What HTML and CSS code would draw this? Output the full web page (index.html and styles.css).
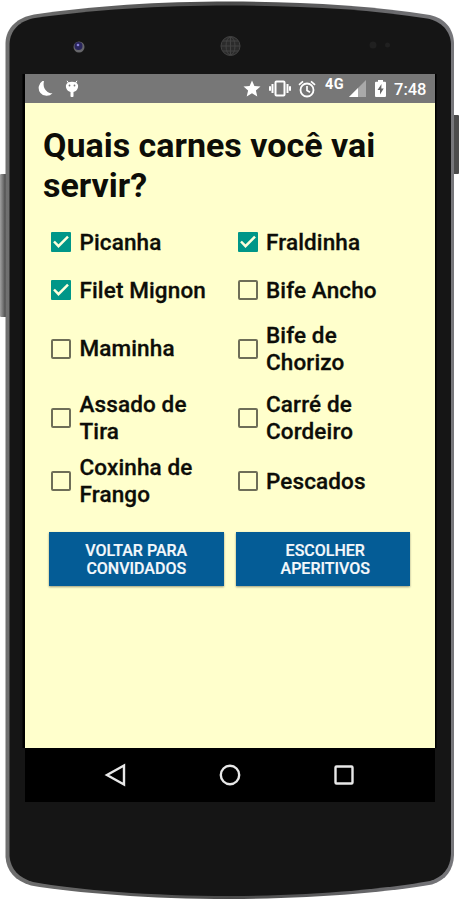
FILE: index.html
```html
<!DOCTYPE html>
<html lang="pt-BR">
	<head>
		<meta charset="UTF-8">
		<title>Churrasco</title>
		<link rel="stylesheet" href="styles.css">
	</head>

	<body>
		<div class="phone">
			<svg class="phone-body" viewBox="0 0 459 900">
				<defs>
					<linearGradient id="leftKey">
						<stop offset="0" stop-color="#a0a0a0"/>
						<stop offset="0.5" stop-color="#6c6c6c"/>
						<stop offset="1" stop-color="#303030"/>
					</linearGradient>
					<linearGradient id="edge">
						<stop offset="0" stop-color="#707070"/>
						<stop offset="0.5" stop-color="#4a4a4a"/>
						<stop offset="1" stop-color="#77777b"/>
					</linearGradient>
				</defs>
				<rect x="0" y="174" width="7" height="143" rx="1" fill="url(#leftKey)"/>
				<rect x="452" y="115" width="7" height="59" rx="1" fill="#4c4c4c"/>
				<path fill="url(#edge)" d="M5.500 43C6 27 18 17.500 34 14.500C90 6 160 1.500 230 1.500S370 5 430 15C444 18 453.500 28 454 43V855C453.500 870 446 880 432 884.500C390 892 310 899 230 899S75 893 31 885.500C15 881 6.500 871 5.500 857Z"/>
				<path fill="#151515" d="M9.500 44C10 30 20 20.500 35 18C90 10 160 5.500 230 5.500S370 9 427 18.500C441 21 450.500 31 451 44V854C450.500 868 443 877 430 881C385 889 310 896 230 896S78 890 33 882C19 878 10.500 869 9.500 856Z"/>
				<circle cx="79" cy="47" r="5.500" fill="#66666a"/>
				<circle cx="78.500" cy="46" r="4" fill="#29255c"/>
				<circle cx="78" cy="45" r="1.300" fill="#8880d8"/>
				<g fill="none" stroke="#434343">
					<circle cx="230.500" cy="46" r="9.500" fill="#2b2b2b"/>
					<ellipse cx="230.500" cy="46" rx="4.500" ry="9"/>
					<path d="M221 46h19M230.500 37v18M223 41h15M223 51h15"/>
				</g>
				<circle cx="373" cy="45" r="3.500" fill="#202020"/>
				<circle cx="387.500" cy="45" r="2.500" fill="#202020"/>
				<path fill="#000" d="M22.500 74h414v674h-414z"/>
			</svg>

			<div class="screen">
				<div class="status-bar">
					<svg class="icon-moon" width="16" height="16" viewBox="0 0 16 16">
						<path fill="#fff" d="M5.500 0A8 8 0 1 0 15.500 12.300C10.500 12.500 5 7.500 7 .2Q6 -.3 5.500 0Z"/>
					</svg>
					<svg class="icon-droid" width="14" height="18" viewBox="0 0 14 18">
						<path stroke="#fff" stroke-width="1" d="M2 .8l2 3M12 .8l-2 3"/>
						<path fill="#fff" d="M1 5C2 2.500 4 1.800 7 1.800S12 2.500 13 5C13.500 8 12 11 8.500 12V16.500Q7 17.500 5.500 16.500V12C2 11 .5 8 1 5Z"/>
						<circle cx="4.500" cy="5.500" r=".9" fill="#777"/>
						<circle cx="9.500" cy="5.500" r=".9" fill="#777"/>
					</svg>
					<span class="spacer"></span>
					<svg class="icon-star" width="18" height="17" viewBox="0 0 18 17">
						<path fill="#fff" d="M9 .5l2.400 5.600 6.100.5-4.600 4 1.400 5.900L9 13.300l-5.300 3.200 1.400-5.900-4.600-4 6.100-.5z"/>
					</svg>
					<svg class="icon-vibrate" width="22" height="17" viewBox="0 0 22 17">
						<rect x="6.500" y="1.500" width="9" height="14" rx="1" fill="none" stroke="#fff" stroke-width="2"/>
						<path fill="none" stroke="#fff" stroke-width="2" d="M3.500 4v9M18.500 4v9M1 6.300v4.400M21 6.300v4.400"/>
					</svg>
					<svg class="icon-alarm" width="18" height="18" viewBox="0 0 18 18">
						<circle cx="9" cy="10" r="6.500" fill="none" stroke="#fff" stroke-width="1.800"/>
						<path fill="none" stroke="#fff" stroke-width="1.700" d="M1 4.800l4-3.500M17 4.800l-4-3.500M9 6v4.500l3 1.800"/>
					</svg>
					<span class="network">4G</span>
					<svg class="icon-signal" width="17" height="17" viewBox="0 0 17 17">
						<path fill="#a9a9a9" d="M17 0v17H0z"/>
						<path fill="#fff" d="M9 8v9H0z"/>
					</svg>
					<svg class="icon-battery" width="11" height="17" viewBox="0 0 11 17">
						<path fill="#fff" d="M3 0h5v1.800h2q1 0 1 1V16q0 1-1 1H1q-1 0-1-1V2.800q0-1 1-1h2z"/>
						<path fill="#666" d="M6.500 4L2.500 10H5v4.500L8.700 8.500H6.300z"/>
					</svg>
					<span class="clock">7:48</span>
				</div>

				<div class="content">
					<h1 class="title">Quais carnes você vai servir?</h1>

					<div class="options">
						<label class="option"><span class="box checked"><svg viewBox="0 0 20 20"><path d="M3 9.500l4.500 4.700L17 4.700"/></svg></span><span>Picanha</span></label>
						<label class="option"><span class="box checked"><svg viewBox="0 0 20 20"><path d="M3 9.500l4.500 4.700L17 4.700"/></svg></span><span>Fraldinha</span></label>
						<label class="option"><span class="box checked"><svg viewBox="0 0 20 20"><path d="M3 9.500l4.500 4.700L17 4.700"/></svg></span><span>Filet Mignon</span></label>
						<label class="option"><span class="box"></span><span>Bife Ancho</span></label>
						<label class="option"><span class="box"></span><span>Maminha</span></label>
						<label class="option"><span class="box"></span><span>Bife de<br>Chorizo</span></label>
						<label class="option"><span class="box"></span><span>Assado de<br>Tira</span></label>
						<label class="option"><span class="box"></span><span>Carré de<br>Cordeiro</span></label>
						<label class="option"><span class="box"></span><span>Coxinha de<br>Frango</span></label>
						<label class="option"><span class="box"></span><span>Pescados</span></label>
					</div>

					<div class="buttons">
						<button class="btn">VOLTAR PARA<br>CONVIDADOS</button>
						<button class="btn btn-next">ESCOLHER<br>APERITIVOS</button>
					</div>
				</div>

				<div class="nav-bar">
					<svg width="24" height="24" viewBox="0 0 24 24"><path d="M20 2.500v19L3 12z"/></svg>
					<svg width="24" height="24" viewBox="0 0 24 24"><circle cx="12" cy="12" r="9.200"/></svg>
					<svg width="24" height="24" viewBox="0 0 24 24"><rect x="3.500" y="3.500" width="17" height="17" rx="1"/></svg>
				</div>
			</div>
		</div>
	</body>
</html>
```

FILE: styles.css
```css
body {
	margin: 0;
	background: #fff;
	font-family: Roboto, sans-serif;
	color: #0d0d08;
}

.phone {
	position: relative;
	width: 459px;
	height: 900px;
	padding: 74px 24px 0 25px;
	box-sizing: border-box;
	overflow: hidden;
}

/* device shell, behind the screen */
.phone-body {
	position: absolute;
	top: 0;
	left: 0;
	width: 459px;
	height: 900px;
}

.screen {
	position: relative;
	display: flex;
	flex-direction: column;
	height: 727.500px;
	background: #ffffcc;
}

.status-bar {
	display: flex;
	align-items: center;
	height: 29px;
	padding: 0 10px 0 12px;
	box-sizing: border-box;
	background: #777;
	color: #fff;
	flex-shrink: 0;
}

.icon-droid {
	margin-left: 12px;
}

.spacer {
	flex: 1;
}

.icon-vibrate {
	margin-left: 8px;
}

.icon-alarm {
	margin-left: 7px;
}

.network {
	margin: 0 4px 8px 9px;
	width: 20px;
	font-size: 14.500px;
	line-height: 16px;
	font-weight: 700;
	letter-spacing: 0.5px;
}

.icon-battery {
	margin-left: 9px;
}

.clock {
	width: 31px;
	margin-left: 8px;
	font-size: 16.500px;
	font-weight: 500;
	line-height: 18px;
	padding-top: 2px;
	white-space: nowrap;
}

.content {
	flex: 1;
	padding: 23px 24px 0;
}

.title {
	margin: 0 0 13px -6px;
	font-size: 34px;
	line-height: 39.500px;
	font-weight: 700;
}

.options {
	display: grid;
	grid-template-columns: 186.500px 1fr;
	grid-template-rows: 48px 48px 69px 69px 58px;
	padding-left: 2px;
}

.option {
	display: flex;
	align-items: center;
	gap: 8.500px;
	font-size: 22.500px;
	line-height: 27px;
	font-weight: 500;
	letter-spacing: 0.12px;
	-webkit-text-stroke: 0.3px #0d0d08;
	white-space: nowrap;
}

.box {
	width: 20px;
	height: 20px;
	box-sizing: border-box;
	border: 2px solid #6e6e58;
	border-radius: 2px;
	flex-shrink: 0;
}

.box.checked {
	border: none;
	border-radius: 1px;
	background: #009688;
}

.box svg {
	display: block;
	fill: none;
	stroke: #ffffdc;
	stroke-width: 2.500;
}

.buttons {
	display: flex;
	gap: 12px;
	margin-top: 22px;
}

.btn {
	width: 174.500px;
	height: 54px;
	padding: 2px 0 0;
	border: none;
	background: #045c96;
	box-shadow: 0 1px 2px rgba(0, 0, 0, 0.4);
	color: #f4f8fb;
	font-family: inherit;
	font-size: 16px;
	line-height: 18.500px;
	font-weight: 500;
	-webkit-text-stroke: 0.2px #f4f8fb;
}

.btn-next {
	padding-left: 5px;
}

.nav-bar {
	display: flex;
	align-items: center;
	justify-content: center;
	gap: 90px;
	height: 54px;
	background: #000;
	flex-shrink: 0;
}

.nav-bar svg {
	fill: none;
	stroke: #e8e8e8;
	stroke-width: 2.400;
}
```
